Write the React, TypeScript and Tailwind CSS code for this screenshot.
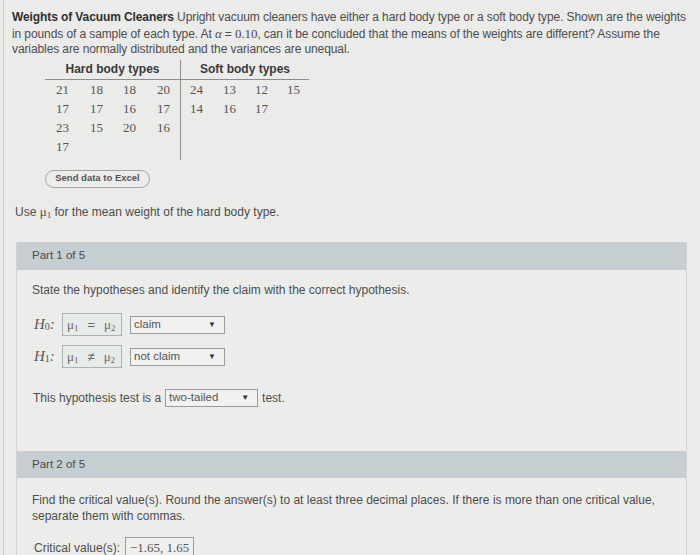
const hard = [
  ["21", "18", "18", "20"],
  ["17", "17", "16", "17"],
  ["23", "15", "20", "16"],
  ["17", "", "", ""],
];

const soft = [
  ["24", "13", "12", "15"],
  ["14", "16", "17", ""],
  ["", "", "", ""],
  ["", "", "", ""],
];

const sans = "font-['Liberation_Sans',Arial,sans-serif]";
const serif = "font-['Liberation_Serif','Times_New_Roman',serif]";

function Mu({ sub }: { sub: string }) {
  return (
    <span className={`${serif} text-[13px]`}>
      μ<sub className="text-[9px] relative top-[2px]">{sub}</sub>
    </span>
  );
}

function Select({ value, width }: { value: string; width: string }) {
  return (
    <div
      className={`${width} h-[18px] flex items-center justify-between border border-[#9a9a9a] bg-[#f1f1f0] pl-[3px] pr-[8px] text-[11.5px] text-[#555]`}
    >
      <span>{value}</span>
      <span className="text-[8px] text-[#333]">▼</span>
    </div>
  );
}

function Hypothesis({ n, op, claim }: { n: string; op: string; claim: string }) {
  return (
    <div className="flex items-center h-[23px]">
      <span className={`${serif} italic text-[15px] text-[#555] w-[28px]`}>
        H<sub className="text-[10px] not-italic relative top-[1px]">{n}</sub>:
      </span>
      <div className="w-[60px] h-[23px] flex items-center gap-[9px] border border-[#a9b4b6] bg-[#e6eae9] px-[4px] text-[#666]">
        <Mu sub="1" />
        <span className="text-[13px]">{op}</span>
        <Mu sub="2" />
      </div>
      <div className="ml-[8px]">
        <Select value={claim} width="w-[95px]" />
      </div>
    </div>
  );
}

export default function App() {
  return (
    <div className={`w-[700px] h-[555px] overflow-hidden bg-[#ebebe9] ${sans} text-[#4d4d4d]`}>
      <div className="ml-[3px] h-full border-l border-[#c9c9c7]">
        {/* problem statement */}
        <p className="pl-[8px] pr-[8px] pt-[10px] text-[12px] leading-[15.5px] tracking-[-0.1px]">
          <b className="text-[#2f2f2f]">Weights of Vacuum Cleaners</b> Upright vacuum cleaners have either a hard body type or
          a soft body type. Shown are the weights in pounds of a sample of each type. At{" "}
          <span className={`${serif} italic text-[13px]`}>α</span> ={" "}
          <span className={`${serif} text-[13px]`}>0.10</span>, can it be concluded that the means of the weights are
          different? Assume the variables are normally distributed and the variances are unequal.
        </p>

        {/* data table */}
        <div className="ml-[41px] mt-[2px] flex">
          <div className="w-[136px] border-r border-[#8d8d8d]">
            <div className="h-[20px] border-b border-[#8d8d8d] flex items-center justify-center font-bold text-[12px] text-[#3a3a3a]">
              Hard body types
            </div>
            {hard.map((row, i) => (
              <div
                key={i}
                className={`grid grid-cols-[34px_33px_34px_auto] h-[19px] items-center pl-[11px] ${serif} text-[13px] text-[#555]`}
              >
                {row.map((v, j) => (
                  <span key={j}>{v}</span>
                ))}
              </div>
            ))}
            <div className="h-[4px]" />
          </div>
          <div className="w-[128px]">
            <div className="h-[20px] border-b border-[#8d8d8d] flex items-center justify-center font-bold text-[12px] text-[#3a3a3a]">
              Soft body types
            </div>
            {soft.map((row, i) => (
              <div
                key={i}
                className={`grid grid-cols-[33px_32px_32px_auto] h-[19px] items-center pl-[9px] ${serif} text-[13px] text-[#555]`}
              >
                {row.map((v, j) => (
                  <span key={j}>{v}</span>
                ))}
              </div>
            ))}
          </div>
        </div>

        <button className="block ml-[41px] mt-[10px] h-[18px] w-[105px] rounded-full border border-[#a5a5a5] bg-[#ececeb] text-[9.5px] font-bold text-[#555]">
          Send data to Excel
        </button>

        <p className="ml-[11px] mt-[14px] text-[12px]">
          Use <Mu sub="1" /> for the mean weight of the hard body type.
        </p>

        {/* part 1 */}
        <div className="ml-[12px] mr-[13px] mt-[21px] border-r border-l border-[#d3d3d1]">
          <div className="h-[28px] bg-[#c6ced1] flex items-center pl-[15px] text-[11.5px] text-[#4a4a4a]">Part 1 of 5</div>
          <div className="pl-[15px] pt-[11px] pb-[44px] bg-[#ecedeb]">
            <p className="text-[12px]">State the hypotheses and identify the claim with the correct hypothesis.</p>
            <div className="mt-[14px] ml-[2px] flex flex-col gap-[9px]">
              <Hypothesis n="0" op="=" claim="claim" />
              <Hypothesis n="1" op="≠" claim="not claim" />
            </div>
            <div className="mt-[21px] ml-[1px] flex items-center text-[12px]">
              <span>This hypothesis test is a</span>
              <div className="ml-[4px]">
                <Select value="two-tailed" width="w-[93px]" />
              </div>
              <span className="ml-[4px]">test.</span>
            </div>
          </div>
        </div>

        {/* part 2 */}
        <div className="ml-[12px] mr-[13px] border-r border-l border-[#d3d3d1]">
          <div className="h-[27px] bg-[#c6ced1] flex items-center pl-[15px] text-[11.5px] text-[#4a4a4a]">Part 2 of 5</div>
          <div className="pl-[15px] pt-[15px] bg-[#ecedeb] h-[120px]">
            <p className="text-[12px] leading-[15.5px] pr-[30px]">
              Find the critical value(s). Round the answer(s) to at least three decimal places. If there is more than one
              critical value,
              <br />
              separate them with commas.
            </p>
            <div className="mt-[13px] ml-[2px] flex items-center text-[12px]">
              <span>Critical value(s):</span>
              <div
                className={`ml-[5px] h-[21px] px-[4px] flex items-center border border-[#9a9a9a] bg-[#efefee] ${serif} text-[13px] text-[#555]`}
              >
                −1.65, 1.65
              </div>
            </div>
          </div>
        </div>
      </div>
    </div>
  );
}
